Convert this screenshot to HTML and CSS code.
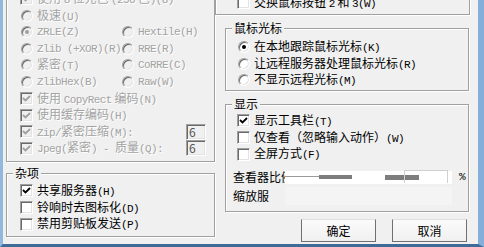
FILE: index.html
```html
<!DOCTYPE html>
<html lang="zh-CN">
<head>
    <meta charset="UTF-8">
    <meta name="viewport" content="width=device-width, initial-scale=1.0">
    <title>连接选项</title>
    <link rel="stylesheet" href="styles.css">
</head>
<body>

<div class="window">
    <div class="col-left">
        <div class="group enc">
            <div class="row off"><span class="check on"><svg viewBox="0 0 11 11"><polyline points="2,5 4.5,7.5 9,3"/></svg></span><span>使用 <span class="en">8</span> 位元色 <span class="en">(256</span> 色<span class="en">)(8)</span></span></div>
            <div class="row off"><span class="radio"></span><span>极速<span class="en">(U)</span></span></div>
            <div class="pair">
                <div class="row off"><span class="radio on"></span><span class="en">ZRLE(Z)</span></div>
                <div class="row off"><span class="radio"></span><span class="en">Hextile(H)</span></div>
                <div class="row off"><span class="radio"></span><span class="en">Zlib (+XOR)(R)</span></div>
                <div class="row off"><span class="radio"></span><span class="en">RRE(R)</span></div>
                <div class="row off"><span class="radio"></span><span>紧密<span class="en">(T)</span></span></div>
                <div class="row off"><span class="radio"></span><span class="en">CoRRE(C)</span></div>
                <div class="row off"><span class="radio"></span><span class="en">ZlibHex(B)</span></div>
                <div class="row off"><span class="radio"></span><span class="en">Raw(W)</span></div>
            </div>
            <div class="row off"><span class="check on"><svg viewBox="0 0 11 11"><polyline points="2,5 4.5,7.5 9,3"/></svg></span><span>使用 <span class="en">CopyRect</span> 编码<span class="en">(N)</span></span></div>
            <div class="row off"><span class="check on"><svg viewBox="0 0 11 11"><polyline points="2,5 4.5,7.5 9,3"/></svg></span><span>使用缓存编码<span class="en">(H)</span></span></div>
            <div class="row off"><span class="check on"><svg viewBox="0 0 11 11"><polyline points="2,5 4.5,7.5 9,3"/></svg></span><span><span class="en">Zip/</span>紧密压缩<span class="en">(M):</span></span><span class="edit">6</span></div>
            <div class="row off"><span class="check on"><svg viewBox="0 0 11 11"><polyline points="2,5 4.5,7.5 9,3"/></svg></span><span><span class="en">Jpeg(</span>紧密<span class="en">) - </span>质量<span class="en">(Q):</span></span><span class="edit">6</span></div>
        </div>

        <div class="group misc">
            <div class="group-title">杂项</div>
            <div class="row"><span class="check on"><svg viewBox="0 0 11 11"><polyline points="2,5 4.5,7.5 9,3"/></svg></span><span>共享服务器<span class="en">(H)</span></span></div>
            <div class="row"><span class="check"></span><span>铃响时去图标化<span class="en">(D)</span></span></div>
            <div class="row"><span class="check"></span><span>禁用剪贴板发送<span class="en">(P)</span></span></div>
        </div>
    </div>

    <div class="col-right">
        <div class="group buttons-swap">
            <div class="row"><span class="check"></span><span>交换鼠标按钮 <span class="en">2</span> 和 <span class="en">3(W)</span></span></div>
        </div>

        <div class="group cursor">
            <div class="group-title">鼠标光标</div>
            <div class="row"><span class="radio on"></span><span>在本地跟踪鼠标光标<span class="en">(K)</span></span></div>
            <div class="row"><span class="radio"></span><span>让远程服务器处理鼠标光标<span class="en">(R)</span></span></div>
            <div class="row"><span class="radio"></span><span>不显示远程光标<span class="en">(M)</span></span></div>
        </div>

        <div class="group display">
            <div class="group-title">显示</div>
            <div class="row"><span class="check on"><svg viewBox="0 0 11 11"><polyline points="2,5 4.5,7.5 9,3"/></svg></span><span>显示工具栏<span class="en">(T)</span></span></div>
            <div class="row"><span class="check"></span><span>仅查看（忽略输入动作）<span class="en">(W)</span></span></div>
            <div class="row"><span class="check"></span><span>全屏方式<span class="en">(F)</span></span></div>
            <div class="row scale">
                <span>查看器比例</span>
                <div class="glitch">
                    <span class="bar thin"></span>
                    <span class="bar b1"></span>
                    <span class="bar b2"></span>
                    <span class="ghost-edit"></span>
                </div>
                <span class="pct en">%</span>
            </div>
            <div class="row scale zoom"><span>缩放服</span><span class="ghost-box"></span></div>
        </div>

        <div class="actions">
            <button type="button">确定</button>
            <button type="button">取消</button>
        </div>
    </div>
</div>

</body>
</html>
```

FILE: styles.css
```css
body {
    margin: 0;
    width: 484px;
    height: 247px;
    overflow: hidden;
    background: #f0f0f0;
    font-family: "Noto Sans CJK SC", "Liberation Sans", sans-serif;
    font-size: 12px;
    color: #000;
}
.window {
    display: flex;
    height: 247px;
    box-sizing: border-box;
    border-left: 3px solid #93b8dd;
    border-right: 6px solid #86aedb;
    border-bottom: 3px solid #3e6b98;
    overflow: hidden;
}
.col-left {
    width: 212px;
    flex: none;
}
.col-right {
    flex: 1;
}

/* etched group box */
.group {
    position: relative;
    border: 1px solid #a0a0a0;
    box-shadow: inset 1px 1px #fff, 1px 1px #fff;
}
.group-title {
    position: absolute;
    top: -9px;
    left: 6px;
    padding: 0 2px;
    line-height: 16px;
    background: #f0f0f0;
}

.row {
    display: flex;
    align-items: center;
    height: 16.6px;
    line-height: 16px;
    white-space: nowrap;
}
.en {
    font-family: "Liberation Mono", monospace;
    font-size: 11px;
    letter-spacing: -0.6px;
}
.off {
    color: #a3a3a3;
    text-shadow: 1px 1px 0 #fff;
}

/* classic 3d check box and radio */
.check, .radio {
    flex: none;
    box-sizing: border-box;
    width: 13px;
    height: 13px;
    margin-right: 4px;
    border: 1px solid;
    border-color: #a0a0a0 #fff #fff #a0a0a0;
    box-shadow: inset 1px 1px #696969, inset -1px -1px #e3e3e3;
    background: #fff;
}
.check svg {
    display: block;
    width: 11px;
    height: 11px;
}
.check polyline {
    fill: none;
    stroke: #000;
    stroke-width: 1.8;
}
.radio {
    width: 12px;
    height: 12px;
    margin-left: 1px;
    border-radius: 50%;
    position: relative;
}
.radio.on::after {
    content: "";
    position: absolute;
    left: 3px;
    top: 3px;
    width: 4px;
    height: 4px;
    border-radius: 50%;
    background: #000;
}
.off .check, .off .radio {
    background: #f0f0f0;
}
.off .check polyline {
    stroke: #a0a0a0;
}
.off .radio.on::after {
    background: #a0a0a0;
}

/* left column */
.enc {
    margin: -26px 0 0 3px;
    height: 188px;
    padding: 15.7px 8px 0 13px;
    box-sizing: border-box;
}
.pair {
    display: grid;
    grid-template-columns: 101px auto;
}
.edit {
    margin-left: auto;
    box-sizing: border-box;
    width: 20px;
    height: 16px;
    padding-left: 2px;
    line-height: 14px;
    border: 1px solid;
    border-color: #a0a0a0 #fff #fff #a0a0a0;
    box-shadow: inset 1px 1px #696969, inset -1px -1px #e3e3e3;
    color: #555;
    text-shadow: none;
}
.misc {
    margin: 11px 0 0 3px;
    height: 64px;
    box-sizing: border-box;
    padding: 8.7px 0 0 13px;
}

/* right column */
.buttons-swap {
    width: 255px;
    height: 35px;
    box-sizing: border-box;
    margin-top: -20px;
    padding: 13.7px 0 0 21px;
}
.cursor {
    width: 244px;
    height: 63px;
    box-sizing: border-box;
    margin: 13px 0 0 10px;
    padding: 9.7px 0 0 11px;
}
.display {
    width: 244px;
    height: 108px;
    box-sizing: border-box;
    margin: 13px 0 0 10px;
    padding: 7.7px 0 0 11px;
}
.scale {
    position: relative;
    margin: 6.2px 0 0 -4px;
}
.zoom {
    margin-top: 2.4px;
}
.glitch {
    position: absolute;
    left: 52px;
    top: 2px;
    width: 167px;
    height: 13px;
    background: #fff;
}
.bar {
    position: absolute;
    background: #7d7d7d;
}
.bar.thin {
    left: 0;
    top: 5px;
    width: 34px;
    height: 1px;
    background: #9a9a9a;
}
.bar.b1 {
    left: 34px;
    top: 4px;
    width: 33px;
    height: 4px;
}
.bar.b2 {
    left: 100px;
    top: 4px;
    width: 34px;
    height: 5px;
}
.ghost-edit {
    position: absolute;
    left: 119px;
    top: -1px;
    width: 42px;
    height: 12px;
    border-top: 1px solid #d0d0d0;
    border-left: 1px solid #d0d0d0;
    border-right: 1px solid #d0d0d0;
}
.pct {
    position: absolute;
    left: 226px;
}
.ghost-box {
    margin-left: 16px;
    width: 167px;
    height: 18px;
    background: #f4f4f4;
}

.actions {
    display: flex;
    justify-content: flex-end;
    gap: 16px;
    padding-right: 11px;
    margin-top: 7px;
}
button {
    width: 75px;
    height: 23px;
    padding: 0;
    font: inherit;
    color: #000;
    border: 1px solid #707070;
    border-top-color: #e0e0e0;
    background: linear-gradient(#fbfbfb, #f0f0f0);
}
```
